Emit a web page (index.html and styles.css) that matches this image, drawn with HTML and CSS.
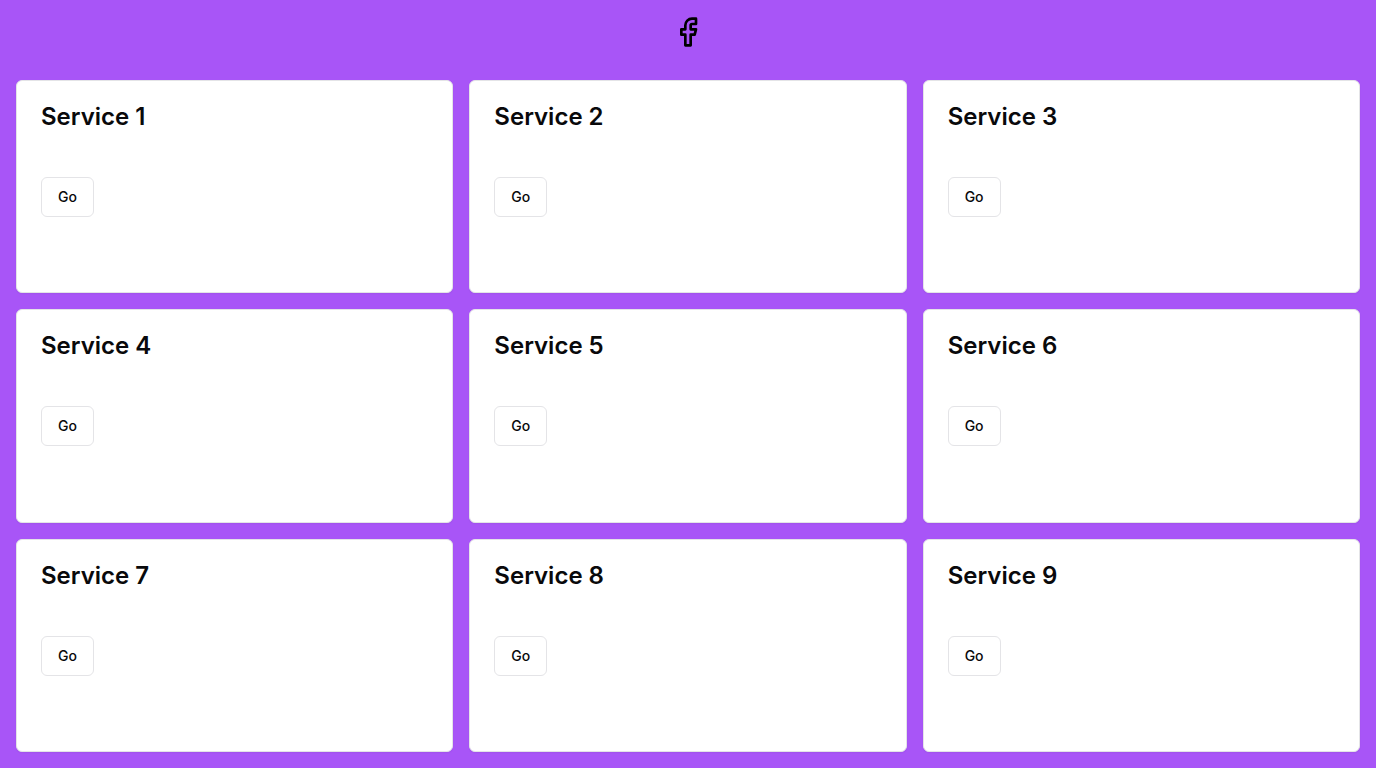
FILE: index.html
```html
<!DOCTYPE html>
<html lang="en">
<head>
<meta charset="utf-8">
<meta name="viewport" content="width=device-width, initial-scale=1">
<title>Services</title>
<link rel="stylesheet" href="styles.css">
</head>
<body>
<div class="page">
<header class="header">
<svg class="logo" viewBox="0 0 24 24" role="img" aria-label="Facebook"><path d="M18 2h-3a5 5 0 0 0-5 5v3H7v4h3v8h4v-8h3l1-4h-4V7a1 1 0 0 1 1-1h3z"/></svg>
</header>
<main class="services">
<section class="card"><h3 class="title">Service 1</h3><button class="button" type="button">Go</button></section>
<section class="card"><h3 class="title">Service 2</h3><button class="button" type="button">Go</button></section>
<section class="card"><h3 class="title">Service 3</h3><button class="button" type="button">Go</button></section>
<section class="card"><h3 class="title">Service 4</h3><button class="button" type="button">Go</button></section>
<section class="card"><h3 class="title">Service 5</h3><button class="button" type="button">Go</button></section>
<section class="card"><h3 class="title">Service 6</h3><button class="button" type="button">Go</button></section>
<section class="card"><h3 class="title">Service 7</h3><button class="button" type="button">Go</button></section>
<section class="card"><h3 class="title">Service 8</h3><button class="button" type="button">Go</button></section>
<section class="card"><h3 class="title">Service 9</h3><button class="button" type="button">Go</button></section>
</main>
</div>
</body>
</html>
```
FILE: styles.css
```css
* {
  box-sizing: border-box;
  margin: 0;
}

body {
  font-family: Inter, sans-serif;
  color: #09090b;
  background: #a855f7;
}

.page {
  display: flex;
  flex-direction: column;
  min-height: 100vh;
}

.header {
  display: flex;
  justify-content: center;
  padding: 16px;
}

.logo {
  width: 32px;
  height: 32px;
  fill: none;
  stroke: #000;
  stroke-width: 2;
  stroke-linecap: round;
  stroke-linejoin: round;
}

.services {
  flex: 1;
  display: grid;
  grid-template-columns: repeat(3, 1fr);
  grid-auto-rows: 1fr;
  gap: 16px;
  padding: 16px;
}

.card {
  display: flex;
  flex-direction: column;
  align-items: flex-start;
  gap: 48px;
  padding: 24px;
  border: 1px solid #e4e4e7;
  border-radius: 6px;
  background: #fff;
  box-shadow: 0 1px 2px rgb(0 0 0 / 5%);
}

.title {
  font-size: 24px;
  font-weight: 600;
  line-height: 24px;
  font-optical-sizing: none;
}

.button {
  height: 40px;
  padding: 8px 16px;
  border: 1px solid #e4e4e7;
  border-radius: 6px;
  background: #fff;
  color: inherit;
  font: 500 14px/20px Inter, sans-serif;
  cursor: pointer;
}
```
